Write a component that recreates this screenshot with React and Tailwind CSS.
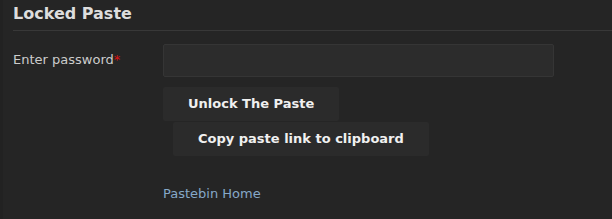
export default function App() {
  return (
    <div
      className="w-[612px] h-[219px] bg-[#252525] overflow-hidden border-l-[3px] border-[#222222]"
      style={{ fontFamily: '"DejaVu Sans", sans-serif' }}
    >
      <div className="pl-[10px]">
        <div className="h-[31px] border-b border-[#383838] flex items-start pt-[3px]">
          <h1 className="text-[16px] font-bold text-[#dddddd] leading-[21px]">Locked Paste</h1>
        </div>
        <div className="flex items-start mt-[13px]">
          <div className="w-[150px] pt-[8px] text-[13px] leading-[16px] text-[#cccccc]">
            Enter password<span className="text-[#dd1111]">*</span>
          </div>
          <input
            type="password"
            className="w-[391px] h-[33px] bg-[#2c2c2c] border border-[#353535] rounded-[2px] outline-none"
          />
        </div>
        <div className="ml-[150px] mt-[10px] flex flex-col items-start">
          <button className="w-[176px] h-[34px] bg-[#2b2b2b] rounded-[2px] text-left pl-[25px] text-[13px] font-bold text-[#f0f0f0]">
            Unlock The Paste
          </button>
          <button className="ml-[10px] mt-[1px] w-[256px] h-[34px] bg-[#2b2b2b] rounded-[2px] text-left pl-[25px] text-[13px] font-bold text-[#f0f0f0]">
            Copy paste link to clipboard
          </button>
          <a href="#" className="mt-[30px] text-[13px] leading-[16px] text-[#86a8c8]">
            Pastebin Home
          </a>
        </div>
      </div>
    </div>
  );
}
